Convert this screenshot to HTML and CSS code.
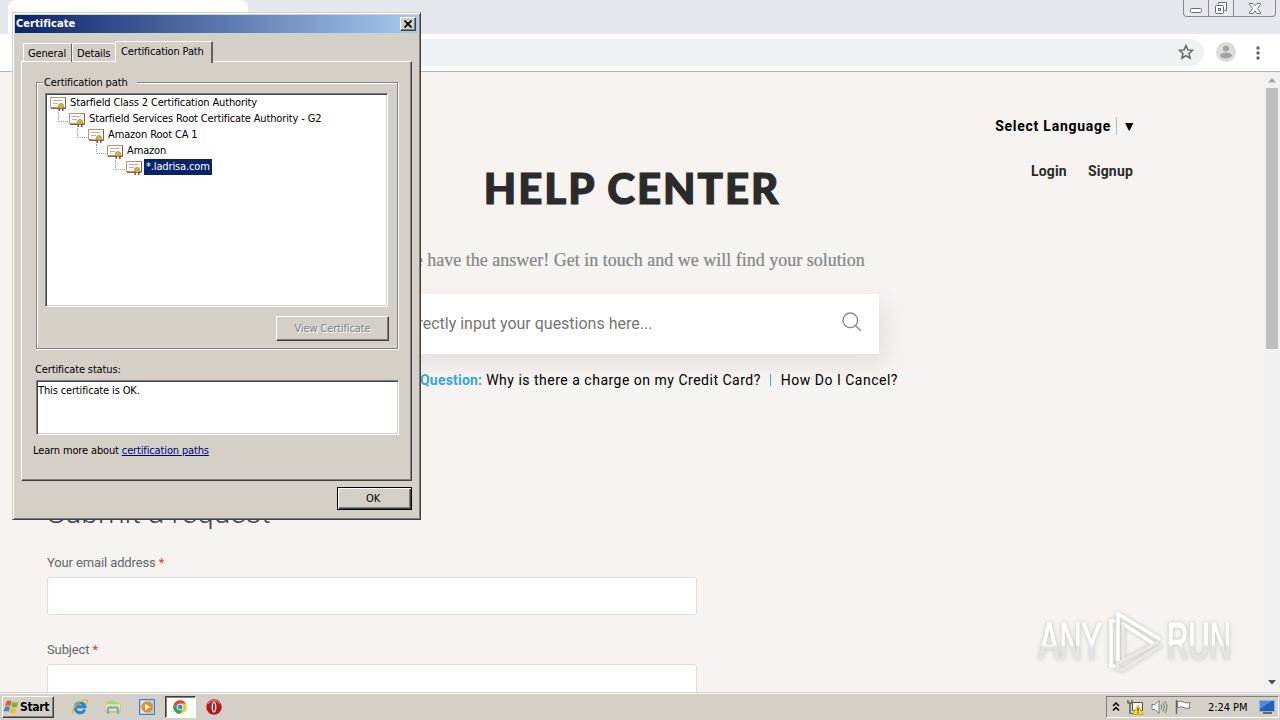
FILE: index.html
```html
<!DOCTYPE html>
<html lang="en">
<head>
    <meta charset="UTF-8">
    <meta name="viewport" content="width=device-width, initial-scale=1.0">
    <title>Help Center</title>
    <link rel="stylesheet" href="styles.css">
</head>
<body>
    <!-- shared icon for the certificate tree -->
    <svg class="defs" width="0" height="0">
        <symbol id="cert" viewBox="0 0 17 14">
            <rect x=".5" y=".5" width="15" height="10" fill="#fffdf5" stroke="#b59c78"/>
            <path d="M1 11.500h14.500v-11" fill="none" stroke="#7a6350"/>
            <path d="M3 3.500h9M3 6.500h5" stroke="#b3abe0"/>
            <path d="M9.800 10l-.8 4M12.200 10l.8 4" stroke="#5347b5" stroke-width="1.500"/>
            <circle cx="11" cy="9" r="2.600" fill="#dfb220" stroke="#a67d10" stroke-width=".6"/>
        </symbol>
    </svg>

    <div class="browser">
        <div class="tabstrip">
            <div class="tab"></div>
            <div class="win-buttons">
                <span class="wb"><svg width="14" height="14" viewBox="0 0 14 14"><rect x="1.5" y="7.500" width="11" height="4" rx="1" fill="#fff" stroke="#666b73"/></svg></span>
                <span class="wb"><svg width="14" height="14" viewBox="0 0 14 14"><path d="M4.500 3.500v-2h8v8h-2" fill="#fff" stroke="#666b73"/><rect x="1.500" y="4.500" width="8" height="8" rx="1" fill="#fff" stroke="#666b73"/><rect x="4.500" y="7.500" width="2" height="2" fill="none" stroke="#666b73"/></svg></span>
                <span class="wb wide"><svg width="14" height="14" viewBox="0 0 14 14"><path d="M1.500 2.500h3.500L7 4.800l2-2.300h3.500v1L9.500 7.500l3 4v1H9L7 10l-2 2.500H1.500v-1l3-4-3-4z" fill="#fff" stroke="#666b73"/></svg></span>
            </div>
        </div>
        <div class="toolbar">
            <div class="address">
                <svg width="16" height="16" viewBox="0 0 16 16"><path d="M8 1.500l1.900 4.400 4.700.4-3.600 3.100 1.100 4.700L8 11.600l-4.100 2.500L5 9.400 1.400 6.300l4.700-.4z" fill="none" stroke="#5f6368" stroke-width="1.500"/></svg>
            </div>
            <svg class="avatar" width="20" height="20" viewBox="0 0 20 20"><circle cx="10" cy="10" r="10" fill="#dcdcdc"/><circle cx="10" cy="6.500" r="3" fill="#a3a3a3"/><ellipse cx="10" cy="13.500" rx="5.800" ry="3" fill="#a3a3a3"/></svg>
            <svg width="4" height="14" viewBox="0 0 4 14" fill="#5f6368"><circle cx="2" cy="2" r="1.700"/><circle cx="2" cy="7" r="1.700"/><circle cx="2" cy="12" r="1.700"/></svg>
        </div>

        <div class="viewport">
            <div class="page">
                <div class="language">
                    <span>Select Language</span>
                    <span class="arrow">▼</span>
                </div>
                <div class="hero">
                    <h1>HELP CENTER</h1>
                    <div class="user-nav"><a>Login</a><a>Signup</a></div>
                </div>
                <p class="tagline">We have the answer! Get in touch and we will find your solution</p>
                <div class="search">
                    <span>Directly input your questions here...</span>
                    <svg width="20" height="20" viewBox="0 0 20 20"><circle cx="8.300" cy="8.300" r="7.300" fill="none" stroke="#8a8a8a" stroke-width="1.400"/><path d="M13.500 13.500l5.500 5.500" stroke="#8a8a8a" stroke-width="1.400"/></svg>
                </div>
                <div class="questions">
                    <b>Popular Question:</b>
                    <span>Why is there a charge on my Credit Card?</span>
                    <i></i>
                    <span>How Do I Cancel?</span>
                </div>
                <div class="form">
                    <h2>Submit a request</h2>
                    <label>Your email address <em>*</em></label>
                    <div class="field"></div>
                    <label>Subject <em>*</em></label>
                    <div class="field"></div>
                </div>
            </div>
            <div class="scrollbar">
                <svg width="8" height="5" viewBox="0 0 8 5"><path d="M0 4.500L4 0l4 4.500z" fill="#a3a3a3"/></svg>
                <div class="thumb"></div>
                <svg class="down" width="8" height="5" viewBox="0 0 8 5"><path d="M0 0h8L4 4.500z" fill="#505050"/></svg>
            </div>
        </div>
    </div>

    <div class="taskbar">
        <div class="start">
            <svg width="17" height="16" viewBox="0 0 17 16">
                <path d="M3.500 2.500Q6 .5 8.500 2.300L7.300 7Q5 5.300 2.200 7z" fill="#e8562a"/>
                <path d="M9.500 2.800Q12 4.500 15.500 3L14 7.800Q11 9 8.300 7.400z" fill="#74b33c"/>
                <path d="M2 8Q4.500 6.500 7 8.100L5.700 12.800Q3.500 11.300.7 12.800z" fill="#3b86d0"/>
                <path d="M8 8.500q2.800 1.600 5.700.5l-1.400 4.600q-3 1.400-5.600-.3z" fill="#f5bd23"/>
            </svg>
            <b>Start</b>
        </div>
        <div class="quick">
            <svg width="18" height="18" viewBox="0 0 18 18">
                <path d="M13.800 11.500A5 5 0 1 1 14 8.700H5.500" fill="none" stroke="#2583ce" stroke-width="2.900"/>
                <path d="M2 15.800C-.5 13 6.500 3.500 13.500 1.900c3.500-.8 3.300 2 2 4" fill="none" stroke="#e9b62f" stroke-width="1.400"/>
            </svg>
        </div>
        <div class="quick">
            <svg width="18" height="18" viewBox="0 0 18 18">
                <path d="M2 3h5l1 1.500h7V15H2z" fill="#e9c865"/>
                <path d="M4 2.500h7l1 2v4H4z" fill="#9fd59a"/>
                <path d="M1.500 6h15v7h-15z" fill="#f8e7a1" stroke="#d8bb65" stroke-width=".7"/>
                <path d="M4 16V11q0-1.500 1.500-1.500h7Q14 9.500 14 11v5" fill="none" stroke="#65b2df" stroke-width="2.300"/>
            </svg>
        </div>
        <div class="quick">
            <svg width="18" height="18" viewBox="0 0 18 18">
                <rect x="1.500" y="1.500" width="15" height="15" fill="#a4cdf1" stroke="#3c83c4"/>
                <rect x="3" y="3" width="8" height="12" fill="#deeefa"/>
                <circle cx="9" cy="9" r="5.800" fill="#f38a1a"/><path d="M7 5.700v6.600L12.300 9z" fill="#fff"/>
            </svg>
        </div>
        <div class="quick active">
            <svg width="14" height="14" viewBox="0 0 14 14">
                <circle cx="7" cy="7" r="6.800" fill="#f4c62e"/>
                <path d="M1.100 3.600A6.800 6.800 0 0 1 12.900 3.600H7L4.100 8.700z" fill="#e04638"/>
                <path d="M1.100 3.600A6.800 6.800 0 0 0 7 13.800L9.900 8.700H4.100z" fill="#32a350"/>
                <circle cx="7" cy="7" r="3.300" fill="#fff"/><circle cx="7" cy="7" r="2.500" fill="#4285e8"/>
            </svg>
        </div>
        <div class="quick">
            <svg width="16" height="16" viewBox="0 0 16 16"><circle cx="8" cy="8" r="7.700" fill="#b7171c"/><path d="M2 5a7 7 0 0 1 12 0" fill="none" stroke="#df6a66" stroke-width="1.500"/><ellipse cx="8" cy="8" rx="2.400" ry="5.500" fill="#fff"/><ellipse cx="8" cy="8" rx="1" ry="4.500" fill="#b7171c"/></svg>
        </div>

        <div class="tray">
            <svg width="8" height="10" viewBox="0 0 8 10"><path d="M1 4l3-3 3 3M1 8.500l3-3 3 3" fill="none" stroke="#000" stroke-width="1.500"/></svg>
            <svg width="17" height="16" viewBox="0 0 17 16">
                <path d="M1 1v3h4V1M3 4v11" fill="none" stroke="#444" stroke-width="1.200"/>
                <path d="M5.500 3.500h10v8h-10z" fill="#f4f4f0" stroke="#555"/><path d="M4 14.500h6" stroke="#555"/>
                <path d="M11 6.500L16.500 15.500h-11z" fill="#ffe12b" stroke="#bda216" stroke-width=".8"/><path d="M11 9v3.500M11 13.300v1.200" stroke="#333" stroke-width="1.200"/>
            </svg>
            <svg width="17" height="16" viewBox="0 0 17 16">
                <path d="M1 5.500h3L8 1.500v13l-4-4H1z" fill="#fff" stroke="#777"/>
                <path d="M10 5.500q1.500 2.500 0 5M12 3.500q3 4.500 0 9M14 2q4 6 0 12" fill="none" stroke="#777"/>
            </svg>
            <svg width="16" height="16" viewBox="0 0 16 16"><path d="M1.500 1v14" stroke="#666" stroke-width="1.500"/><path d="M2.500 2.500q3-1 5.500.5t7 .5q-2 3 0 5.500-4 .8-6.500-.5T2.500 8.500z" fill="#fff" stroke="#777"/></svg>
            <span class="clock">2:24 PM</span>
            <svg width="17" height="14" viewBox="0 0 17 14"><rect x=".5" y=".5" width="15" height="11" fill="#2460b5" stroke="#8fb4df"/><path d="M1 1h12L1 9z" fill="#4d8bd6"/><path d="M4 13h9" stroke="#444" stroke-width="1.500"/></svg>
        </div>
    </div>

    <svg class="watermark" width="206" height="76" viewBox="0 0 206 76">
        <defs>
            <linearGradient id="fade" x1="0" y1="0" x2="0" y2="1"><stop offset=".55" stop-color="#fff"/><stop offset=".6" stop-color="#e6e3e2"/></linearGradient>
        </defs>
        <text transform="translate(5 55) scale(.6 1)" fill="url(#fade)" stroke="url(#fade)">ANY</text>
        <text transform="translate(133 55) scale(.58 1)" fill="url(#fade)" stroke="url(#fade)">RUN</text>
        <g fill="none" stroke-linejoin="round" stroke-linecap="round" stroke-width="3.500">
            <path d="M80 17h-3v45h3M84 10v46" stroke="#fff"/>
            <path d="M84 10L125 34.500M89 20L120 40" stroke="#fff"/>
            <path d="M84 59L123 39M90 65L126 42M84 59l-1 6 7 1M89 21v32" stroke="#eae7e6"/>
        </g>
    </svg>

    <div class="dialog">
        <div class="titlebar">
            <b>Certificate</b>
            <span class="close"><svg width="8" height="8" viewBox="0 0 8 8"><path d="M.5.500l7 7M7.500.500l-7 7" stroke="#000" stroke-width="1.700"/></svg></span>
        </div>
        <div class="tabs">
            <span class="t general">General</span>
            <span class="t details">Details</span>
            <span class="t current">Certification Path</span>
        </div>
        <div class="panel">
            <fieldset>
                <legend>Certification path</legend>
                <div class="tree">
                    <div class="node"><svg width="17" height="14"><use href="#cert"/></svg><span>Starfield Class 2 Certification Authority</span></div>
                    <div class="node l1"><i></i><svg width="17" height="14"><use href="#cert"/></svg><span>Starfield Services Root Certificate Authority - G2</span></div>
                    <div class="node l2"><i></i><svg width="17" height="14"><use href="#cert"/></svg><span>Amazon Root CA 1</span></div>
                    <div class="node l3"><i></i><svg width="17" height="14"><use href="#cert"/></svg><span>Amazon</span></div>
                    <div class="node l4"><i></i><svg width="17" height="14"><use href="#cert"/></svg><span class="selected">*.ladrisa.com</span></div>
                </div>
                <div class="btn disabled">View Certificate</div>
            </fieldset>
            <div class="status-label">Certificate status:</div>
            <div class="status">This certificate is OK.</div>
            <div class="learn">Learn more about <a>certification paths</a></div>
        </div>
        <div class="btn ok">OK</div>
    </div>
</body>
</html>
```
FILE: styles.css
```css
* {
    box-sizing: border-box;
}
body {
    margin: 0;
    width: 1280px;
    height: 720px;
    overflow: hidden;
    display: flex;
    flex-direction: column;
    position: relative;
    font-family: Roboto, "Liberation Sans", sans-serif;
    background: #f6f3f1;
}
svg {
    display: block;
    flex: none;
}
.defs {
    position: absolute;
}

/* browser window */
.browser {
    height: 692px;
    display: flex;
    flex-direction: column;
    overflow: hidden;
}
.tabstrip {
    height: 34px;
    flex: none;
    background: #e5e9ed;
    display: flex;
    justify-content: space-between;
    padding: 0 4px 0 8px;
}
.tab {
    width: 240px;
    background: #fff;
    border-radius: 8px 8px 0 0;
}
.win-buttons {
    display: flex;
    height: 17px;
    border: 1px solid #858b93;
    border-top: none;
    border-radius: 0 0 4px 4px;
}
.wb {
    width: 25px;
    display: flex;
    justify-content: center;
    align-items: center;
    border-right: 1px solid #858b93;
}
.wide {
    width: 41px;
    border-right: none;
}
.toolbar {
    height: 38px;
    flex: none;
    background: #fff;
    border-bottom: 1px solid #b5b5b5;
    display: flex;
    align-items: center;
    padding: 0 20px 0 90px;
}
.address {
    flex: 1;
    height: 27px;
    border-radius: 14px;
    background: #eff2f5;
    display: flex;
    align-items: center;
    justify-content: flex-end;
    padding-right: 10px;
}
.avatar {
    margin: -2px 20px 0 12px;
}
.address svg {
    margin-top: -2px;
}
.viewport {
    flex: 1;
    display: flex;
    min-height: 0;
}

/* help center page */
.page {
    width: 1264px;
    padding-top: 44px;
    overflow: hidden;
    background: #f6f3f1;
}
.language {
    display: flex;
    justify-content: flex-end;
    align-items: center;
    height: 20px;
    padding-right: 128px;
    font-size: 14px;
    font-weight: bold;
    letter-spacing: 0.75px;
    color: #000;
}
.arrow {
    margin-left: 5px;
    padding-left: 5px;
    border-left: 1px solid #bbb;
    line-height: 18px;
    letter-spacing: 0;
}
.hero {
    height: 80px;
    display: grid;
    grid-template-columns: 1fr auto 1fr;
}
h1 {
    grid-column: 2;
    margin: 26px 0 0;
    font: 900 42px/52px Lato, sans-serif;
    letter-spacing: 2px;
    -webkit-text-stroke: 1.2px #2b2b2b;
    color: #2b2b2b;
}
.user-nav {
    display: flex;
    justify-content: flex-end;
    gap: 21px;
    padding: 25px 131px 0 0;
    font-size: 14px;
    line-height: 20px;
    font-weight: bold;
    letter-spacing: 0.2px;
    color: #2b2b2b;
}
.tagline {
    margin: 34px 0 24px;
    text-align: center;
    font: 18px/20px "Liberation Serif", serif;
    -webkit-text-stroke: 0.2px #858585;
    color: #858585;
}
.search {
    width: 494px;
    height: 60px;
    margin: 0 auto;
    padding: 0 17px 0 18px;
    background: #fff;
    box-shadow: 6px 10px 24px rgba(90, 60, 50, 0.1);
    display: flex;
    align-items: center;
    justify-content: space-between;
    font-size: 16px;
    color: #757575;
}
.search span {
    margin-top: -2px;
}
.search svg {
    margin-top: -4px;
}
.questions {
    height: 20px;
    margin-top: 16px;
    display: flex;
    justify-content: center;
    align-items: center;
    font-size: 14px;
    letter-spacing: 0.5px;
    color: #000;
}
.questions b {
    margin-right: 4px;
    letter-spacing: 0.2px;
    color: #37a8d8;
}
.questions i {
    width: 1px;
    height: 12px;
    margin: 0 10px 0 9px;
    background: #37a8d8;
}
.form {
    width: 650px;
    margin: 103px 0 0 47px;
}
h2 {
    margin: 0 0 20px;
    font-size: 30px;
    line-height: 40px;
    font-weight: 300;
    color: #444;
}
label {
    display: block;
    height: 24px;
    margin-bottom: 0;
    line-height: 20px;
    font-size: 13px;
    letter-spacing: -0.12px;
    color: #666;
}
em {
    font-style: normal;
    color: #e33;
}
.field {
    height: 38px;
    margin-bottom: 25px;
    background: #fff;
    border: 1px solid #ddd;
    border-radius: 3px;
}
.scrollbar {
    width: 16px;
    background: #f1f1f1;
    display: flex;
    flex-direction: column;
    align-items: center;
    padding: 6px 0 7px;
}
.thumb {
    width: 12px;
    height: 261px;
    margin-top: 5px;
    background: #bfbfbf;
}
.down {
    margin-top: auto;
}

/* taskbar */
.taskbar {
    height: 28px;
    display: flex;
    align-items: center;
    background: #d4d0c8;
    border-top: 1px solid #d4d0c8;
    box-shadow: inset 0 1px #fff;
    padding: 1px 0 0 2px;
    font: 11px "DejaVu Sans Condensed", "DejaVu Sans", sans-serif;
}
.start {
    width: 52px;
    height: 22px;
    display: flex;
    align-items: center;
    margin-right: 10px;
    border: 1px solid;
    border-color: #fff #404040 #404040 #fff;
    box-shadow: inset -1px -1px #808080;
    font-size: 12px;
    letter-spacing: -0.3px;
}
.quick {
    width: 31px;
    height: 22px;
    margin-right: 2.6px;
    display: flex;
    align-items: center;
    justify-content: center;
}
.active {
    background: #fff;
    border: 1px solid;
    border-color: #404040 #fff #fff #404040;
    box-shadow: inset 1px 1px #808080;
}
.tray {
    height: 22px;
    width: 173px;
    margin: 0 1px 0 auto;
    display: flex;
    align-items: center;
    gap: 7px;
    padding-left: 5px;
    border: 1px solid;
    border-color: #808080 #fff #fff #808080;
}
.clock {
    width: 42px;
    margin: 0 2px 0 10px;
    letter-spacing: -0.05px;
    white-space: nowrap;
}

.watermark {
    position: absolute;
    left: 1034px;
    top: 604px;
    overflow: visible;
    filter: drop-shadow(0 0 2px rgba(70, 70, 80, 0.3));
}
.watermark text {
    font: 51px "Liberation Sans", sans-serif;
}

/* certificate dialog, floats over the browser */
.dialog {
    position: absolute;
    left: 12px;
    top: 12px;
    width: 409px;
    height: 508px;
    padding: 2px;
    background: #d4d0c8;
    border: 1px solid;
    border-color: #d4d0c8 #404040 #404040 #d4d0c8;
    box-shadow: inset 1px 1px #fff, inset -1px -1px #808080;
    font: 11px/14px "DejaVu Sans Condensed", "DejaVu Sans", sans-serif;
    letter-spacing: -0.14px;
    color: #000;
}
.titlebar {
    height: 18px;
    display: flex;
    align-items: center;
    justify-content: space-between;
    padding: 0 2px 0 1px;
    background: linear-gradient(to right, #0a246a, #a6caf0);
    letter-spacing: 0.05px;
    color: #fff;
}
.close {
    width: 16px;
    height: 14px;
    display: flex;
    align-items: center;
    justify-content: center;
    background: #d4d0c8;
    border: 1px solid;
    border-color: #fff #404040 #404040 #fff;
    box-shadow: inset -1px -1px #808080;
}
.tabs {
    height: 21px;
    margin: 8px 0 0 8px;
    display: flex;
    align-items: flex-end;
    position: relative;
    z-index: 1;
}
.t {
    height: 19px;
    padding: 3px 0 0 4px;
    border: 1px solid #fff;
    border-bottom: none;
    border-right-color: #606060;
    border-radius: 2px 2px 0 0;
    white-space: nowrap;
}
.general {
    width: 49px;
}
.details {
    width: 43px;
    border-right: none;
}
.current {
    width: 98px;
    height: 22px;
    margin-bottom: -1px;
    padding: 3px 0 0 5px;
    border-right: 2px solid #606060;
    background: #d4d0c8;
}
.panel {
    width: 391px;
    height: 420px;
    margin: -1px 0 0 6px;
    padding: 13px 13px 0 14px;
    border: 1px solid;
    border-color: #fff #404040 #404040 #fff;
    box-shadow: inset -1px -1px #808080;
}
fieldset {
    width: 362px;
    height: 274px;
    margin: 0;
    padding: 4px 8px 0;
    border: 1px solid #808080;
    box-shadow: 1px 1px #fff, inset 1px 1px #fff;
}
legend {
    height: 14px;
    padding: 1px 9px 0 1px;
    margin-left: -2px;
    background: #d4d0c8;
}
.tree {
    width: 343px;
    height: 214px;
    padding: 1px 0 0 3px;
    background: #fff;
    border: 1px solid;
    border-color: #808080 #fff #fff #808080;
    box-shadow: inset 1px 1px #404040, inset -1px -1px #d4d0c8;
}
.node {
    height: 16px;
    display: flex;
    align-items: center;
    white-space: nowrap;
}
.node svg {
    margin: 2px 1px 0 1px;
}
.node span {
    padding: 0 2px;
    line-height: 16px;
}
.node i {
    width: 10px;
    height: 10px;
    margin: -4px 0 0 9px;
    border: dotted #a0a0a0;
    border-width: 0 0 1px 1px;
}
.l2 {
    padding-left: 19px;
}
.l3 {
    padding-left: 38px;
}
.l4 {
    padding-left: 57px;
}
.node .selected {
    background: #0a246a;
    color: #fff;
}
.btn {
    display: flex;
    align-items: center;
    justify-content: center;
    border: 1px solid;
    border-color: #fff #404040 #404040 #fff;
    box-shadow: inset -1px -1px #808080;
}
.disabled {
    width: 113px;
    height: 25px;
    margin: 9px 0 0 auto;
    padding-top: 1px;
    color: #808080;
    text-shadow: 1px 1px #fff;
}
.status-label {
    margin: 14px 0 0 -1px;
}
.status {
    width: 363px;
    height: 55px;
    margin-top: 3px;
    padding: 3px 1px;
    background: #fff;
    border: 1px solid;
    border-color: #808080 #fff #fff #808080;
    box-shadow: inset 1px 1px #404040, inset -1px -1px #d4d0c8;
}
.learn {
    margin: 9px 0 0 -3px;
}
.learn a {
    color: #00007c;
    text-decoration: underline;
}
.ok {
    width: 75px;
    height: 23px;
    margin: 6px 6px 0 auto;
    padding-right: 3px;
    border-color: #000;
    box-shadow: inset 1px 1px #fff, inset -1px -1px #404040, inset -2px -2px #808080;
}
```
